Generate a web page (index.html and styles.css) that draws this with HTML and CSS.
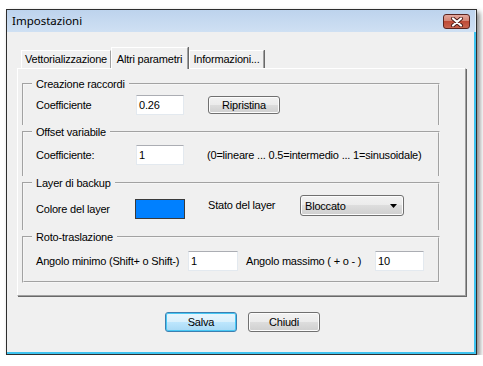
FILE: index.html
```html
<!DOCTYPE html>
<html lang="it">
<head>
  <meta charset="UTF-8">
  <title>Impostazioni</title>
  <link rel="stylesheet" href="styles.css">
</head>
<body>
  <div class="window">
    <div class="titlebar">
      <span class="title">Impostazioni</span>
      <div class="close">
        <svg width="14" height="10" viewBox="0 0 14 10">
          <path d="M3 1.5 L11 8.5 M11 1.5 L3 8.5" stroke="#4a1b16" stroke-width="4" stroke-linecap="round"/>
          <path d="M3 1.5 L11 8.5 M11 1.5 L3 8.5" stroke="#fff" stroke-width="2.2" stroke-linecap="round"/>
        </svg>
      </div>
    </div>

    <div class="client">
      <div class="tabs">
        <div class="tab t1">Vettorializzazione</div>
        <div class="tab active">Altri parametri</div>
        <div class="tab t3">Informazioni...</div>
      </div>

      <div class="panel">
        <div class="groups">
          <fieldset class="group g1">
            <legend>Creazione raccordi</legend>
            <div class="row">
              <span class="lbl">Coefficiente</span>
              <div class="field">0.26</div>
              <div class="btn small">Ripristina</div>
            </div>
          </fieldset>

          <fieldset class="group g2">
            <legend>Offset variabile</legend>
            <div class="row">
              <span class="lbl">Coefficiente:</span>
              <div class="field">1</div>
              <span class="hint">(0=lineare ... 0.5=intermedio ... 1=sinusoidale)</span>
            </div>
          </fieldset>

          <fieldset class="group g3">
            <legend>Layer di backup</legend>
            <div class="row top">
              <span class="lbl low">Colore del layer</span>
              <div class="swatch"></div>
              <span class="lbl state">Stato del layer</span>
              <div class="combo">
                <span>Bloccato</span>
                <svg width="7" height="4" viewBox="0 0 7 4"><path d="M0 0 H7 L3.5 4 Z" fill="#000"/></svg>
              </div>
            </div>
          </fieldset>

          <fieldset class="group g4">
            <legend>Roto-traslazione</legend>
            <div class="row">
              <span class="lbl wide">Angolo minimo (Shift+ o Shift-)</span>
              <div class="field f50">1</div>
              <span class="lbl max">Angolo massimo ( + o - )</span>
              <div class="field f49">10</div>
            </div>
          </fieldset>
        </div>
      </div>

      <div class="actions">
        <div class="btn default">Salva</div>
        <div class="btn">Chiudi</div>
      </div>
    </div>
  </div>
</body>
</html>
```

FILE: styles.css
```css
body {
  margin: 0;
  background: #fff;
  font-family: "Liberation Sans", Arial, sans-serif;
  font-size: 11px;
  letter-spacing: -0.2px;
  color: #000;
}
.window {
  margin: 9px 0 0 6px;
  width: 471px;
  height: 346px;
  box-sizing: border-box;
  border: 1px solid #2e2e2e;
  background: #f0f0f0;
  box-shadow: inset -2px -2px 0 #3ec3ef, 3px 3px 5px rgba(0,0,0,0.45);
  display: flex;
  flex-direction: column;
}
.titlebar {
  height: 22px;
  display: flex;
  align-items: flex-start;
  justify-content: space-between;
  background: linear-gradient(to bottom, #bdd3ed, #cfe0f3);
  border-right: 1px solid #e4eef8;
}
.title {
  font-family: "Noto Sans", sans-serif;
  font-size: 11.5px;
  letter-spacing: 0;
  line-height: 22px;
  padding-left: 5px;
}
.close {
  margin: 4px 5px 0 0;
  width: 27px;
  height: 15px;
  box-sizing: border-box;
  border: 1px solid #5b2520;
  border-radius: 3px;
  background: linear-gradient(to bottom, #e4a79c 0%, #d48575 45%, #bf4b37 50%, #c8644f 100%);
  display: flex;
  align-items: center;
  justify-content: center;
}
.client {
  flex: 1;
  padding: 15px 8px 0 10px;
  display: flex;
  flex-direction: column;
}
.tabs {
  display: flex;
  align-items: flex-end;
  padding-left: 4px;
  height: 21px;
  position: relative;
  z-index: 1;
}
.tab {
  height: 18px;
  box-sizing: border-box;
  border-top: 1px solid #fff;
  border-left: 1px solid #fff;
  border-right: 1px solid #a0a0a0;
  box-shadow: 1px 0 0 #696969;
  line-height: 17px;
  text-align: center;
  white-space: nowrap;
}
.t1 { width: 90px; }
.t3 { width: 75px; margin-left: 1px; }
.tab.active {
  width: 77px;
  height: 22px;
  margin-bottom: -1px;
  background: #f0f0f0;
  line-height: 22px;
}
.panel {
  width: 449px;
  height: 228px;
  box-sizing: border-box;
  border: 1px solid;
  border-color: #fff #a0a0a0 #a0a0a0 #fff;
  box-shadow: 1px 1px 0 #696969;
  padding: 8px 0 0 4px;
}
.groups {
  width: 418px;
}
.group {
  margin: 0;
  min-width: 0;
  border: 2px groove #f6f6f6;
  border-bottom: none;
  padding: 0 10px 0 12px;
}
.group legend {
  margin-left: -4px;
  padding: 0 4px;
  line-height: 14px;
}
.g1 { padding-top: 4px; padding-bottom: 10px; }
.g2 { padding-top: 6px; padding-bottom: 11px; }
.g3 { padding-top: 5px; padding-bottom: 11px; }
.g4 { padding-top: 7px; padding-bottom: 10px; border-bottom: 2px groove #f6f6f6; }
.row {
  display: flex;
  align-items: center;
  height: 20px;
  white-space: nowrap;
}
.row.top {
  align-items: flex-start;
  height: 24px;
}
.lbl {
  width: 100px;
  flex: none;
}
.lbl.low {
  width: 99px;
  margin-top: 4px;
  line-height: 20px;
}
.lbl.state {
  width: 92px;
  margin-left: 23px;
  line-height: 21px;
}
.lbl.wide { width: 152px; }
.lbl.max { width: 129px; margin-left: 8px; }
.field {
  width: 48px;
  height: 20px;
  flex: none;
  box-sizing: border-box;
  border: 1px solid #e3e9ef;
  border-top-color: #abadb3;
  background: #fff;
  padding-left: 2px;
  line-height: 18px;
}
.field.f50 { width: 50px; }
.field.f49 { width: 49px; }
.hint {
  margin-left: 23px;
}
.swatch {
  margin-top: 4px;
  width: 50px;
  height: 20px;
  flex: none;
  box-sizing: border-box;
  border: 1px solid #3a3a3a;
  background: #0080ff;
}
.combo {
  width: 104px;
  height: 21px;
  box-sizing: border-box;
  border: 1px solid #707070;
  border-radius: 3px;
  background: linear-gradient(to bottom, #f2f2f2 0%, #ebebeb 50%, #dddddd 50%, #cfcfcf 100%);
  box-shadow: inset 0 0 0 1px #fcfcfc;
  display: flex;
  align-items: center;
  justify-content: space-between;
  padding: 0 6px 0 4px;
}
.btn {
  width: 72px;
  height: 20px;
  box-sizing: border-box;
  border: 1px solid #707070;
  border-radius: 3px;
  background: linear-gradient(to bottom, #f2f2f2 0%, #ebebeb 50%, #dddddd 50%, #cfcfcf 100%);
  box-shadow: inset 0 0 0 1px #fcfcfc;
  text-align: center;
  line-height: 18px;
}
.btn.small {
  height: 18px;
  line-height: 16px;
  margin-left: 24px;
}
.btn.default {
  border-color: #3c7fb1;
  background: linear-gradient(to bottom, #eaf6fd 0%, #d9f0fc 50%, #bee6fd 50%, #a7d9f5 100%);
  box-shadow: inset 0 0 0 1px #48c8f4;
}
.actions {
  display: flex;
  justify-content: center;
  gap: 11px;
  margin-top: 16px;
}
```
